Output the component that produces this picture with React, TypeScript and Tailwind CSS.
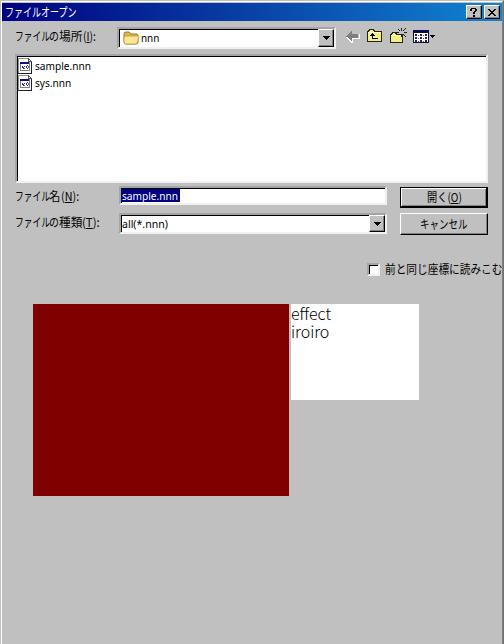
import React from 'react';

const sunken = 'border-2 border-t-[#a4a4a4] border-l-[#a4a4a4] border-b-[#f0f0f0] border-r-[#f0f0f0] bg-white shadow-[inset_1px_1px_0_#000]';
const raised = 'border border-t-white border-l-white border-b-black border-r-black bg-[#c0c0c0] shadow-[inset_-1px_-1px_0_#808080]';

// A run of text condensed horizontally inside a box of known width.
function Run({ box, scale, children }: { box: string; scale: string; children: React.ReactNode }) {
  return (
    <span className={`inline-block whitespace-nowrap ${box}`}>
      <span className={`inline-block origin-left ${scale}`}>{children}</span>
    </span>
  );
}

function DropButton() {
  return (
    <span className={`flex h-full w-4 shrink-0 items-center justify-center ${raised}`}>
      <svg width="7" height="4" shapeRendering="crispEdges"><path d="M0 0h7v1H0zM1 1h5v1H1zM2 2h3v1H2zM3 3h1v1H3z" /></svg>
    </span>
  );
}

function FileIcon() {
  return (
    <svg width="16" height="16" viewBox="0 0 16 16" shapeRendering="crispEdges" className="shrink-0">
      <path d="M0 0h10l4 4v11H0z" fill="#fff" />
      <path d="M0 0h1v15H0zM1 0h9v1H1z" fill="#909090" />
      <path d="M13 4h1v11h-1zM0 15h14v1H0z" fill="#222" />
      <path d="M10 0h1v3h3v1h-4zM11 1h1v1h-1zM12 2h1v1h-1z" fill="#555" />
      <path d="M2 4h10v9H2z" fill="#808080" />
      <path d="M2 4h9v2H2z" fill="#101080" />
      <path d="M3 6h8v6H3z" fill="#fff" />
      <path d="M4 8h1v2H4zM5 9h1v2H5zM6 8h1v1H6zM8 8h1v2H8zM9 7h1v1H9zM9 10h1v1H9z" fill="#2828a8" />
      <path d="M10 8h1v2h-1zM6 10h1v1H6z" fill="#607080" />
    </svg>
  );
}

function ToolIcons() {
  return (
    <svg width="92" height="18" viewBox="0 0 92 18" shapeRendering="crispEdges" className="ml-[9px]">
      <path d="M1 9h1v1h1v1h1v1h1v1h1v1h1v-3h7V7h1v5H8v4H6v-1H5v-1H4v-1H3v-1H2v-1H1z" fill="#fff" />
      <path d="M1 9h1V8h1V7h1V6h1V5h1V4h1v3h6v4H7v3H6v-1H5v-1H4v-1H3v-1H1z" fill="#808080" />
      <path d="M22.500 14.500v-10h1v-1h1v-1h4v1h1v1h7v10z" fill="#f4f080" stroke="#222" />
      <path d="M23 5h12v1H23z" fill="#ffffd0" />
      <path d="M27 6h1v1h1v1h1v1h-2v2h5v1h-6V9h-2V8h1V7h1z" fill="#000" />
      <path d="M45.500 15.500v-8h1v-1h1v-1h3v1h1v1h6v8z" fill="#f4f080" stroke="#222" />
      <path d="M46 8h11v1H46z" fill="#ffffd0" />
      <path d="M56 1h1v3h-1zM56 7h1v3h-1zM51 5h3v1h-3zM59 5h3v1h-3zM53 2h1v1h-1zM54 3h1v1h-1zM60 1h1v1h-1zM59 2h1v1h-1zM58 3h1v1h-1zM54 7h1v1h-1zM58 7h1v1h-1zM59 8h1v1h-1zM60 9h1v1h-1z" fill="#222" />
      <path d="M68 3h16v13H68z" fill="#101030" />
      <path d="M69 4h14v1H69z" fill="#000080" />
      <path d="M69 6h14v9H69z" fill="#fff" />
      <path d="M70 7h2v2h-2zM75 7h2v2h-2zM80 7h2v2h-2zM70 10h2v2h-2zM75 10h2v2h-2zM80 10h2v2h-2zM70 13h2v2h-2zM75 13h2v2h-2zM80 13h2v2h-2z" fill="#202070" />
      <path d="M73 8h1v1h-1zM78 8h1v1h-1zM73 11h1v1h-1zM78 11h1v1h-1zM73 14h1v1h-1zM78 14h1v1h-1z" fill="#555" />
      <path d="M85 8h5v1h-5zM86 9h3v1h-3zM87 10h1v1h-1z" fill="#000" />
    </svg>
  );
}

export default function App() {
  return (
    <div className="flex h-[644px] w-[504px] flex-col overflow-hidden border-l border-t border-r border-[#c0c0c0] border-r-[#707070] bg-[#c0c0c0] font-['Noto_Sans_CJK_JP',sans-serif] text-[12px] leading-[16px] text-black">
      <div className="flex h-full flex-col border-l border-r border-t border-white border-r-[#808080] pt-px">
        <header className="flex h-[18px] shrink-0 items-center bg-linear-to-r/srgb from-[#000080] to-[#1084d0] pl-[3px] pr-[2px] text-white">
          <Run box="w-[72px]" scale="scale-x-[.75]">ファイルオープン</Run>
          <div className="ml-auto flex gap-[2px]">
            <button className={`flex h-[14px] w-4 items-center justify-center ${raised}`} aria-label="?">
              <svg width="8" height="9" shapeRendering="crispEdges"><path d="M1 0h5v1H1zM0 1h2v2H0zM5 1h2v2H5zM4 3h2v1H4zM3 4h2v2H3zM3 7h2v2H3z" /></svg>
            </button>
            <button className={`flex h-[14px] w-4 items-center justify-center ${raised}`} aria-label="×">
              <svg width="8" height="7" shapeRendering="crispEdges"><path d="M0 0h2v1H0zM6 0h2v1H6zM1 1h2v1H1zM5 1h2v1H5zM2 2h4v1H2zM3 3h2v1H3zM2 4h4v1H2zM1 5h2v1H1zM5 5h2v1H5zM0 6h2v1H0zM6 6h2v1H6z" /></svg>
            </button>
          </div>
        </header>
        <main className="flex flex-col pl-[13px]">
          <div className="mt-[6px] flex h-[22px]">
            <div className="mt-px flex w-[102px]">
              <Run box="w-[34px]" scale="scale-x-[.73]">ファイル</Run>
              <Run box="w-[10px]" scale="scale-x-[.83]">の</Run>
              <Run box="w-[24px]" scale="scale-x-[.98]">場所</Run>
              <Run box="w-[18px]" scale="scale-x-[.86]">(<u>I</u>):</Run>
            </div>
            <div className={`flex w-[219px] items-center ${sunken}`}>
              <svg width="17" height="14" viewBox="0 0 17 14" className="ml-[4px]">
                <path d="M1 3q0-2 2-2h3l2 2h6q1 0 1 2v6q0 2-2 2H3q-2 0-2-2z" fill="#d6b747" stroke="#9c7b28" />
                <path d="M3 5h12q1 0 1 1l-2 6q0 1-2 1H3q-2 0-2-2V7q0-2 2-2z" fill="#fbe797" stroke="#b79538" strokeWidth=".7" />
              </svg>
              <span className="ml-px flex-1 font-['Noto_Sans'] text-[11px]"><Run box="w-[20px]" scale="scale-x-[.9]">nnn</Run></span>
              <DropButton />
            </div>
            <ToolIcons />
          </div>
          <div className={`mt-[5px] h-[129px] w-[473px] pt-px pl-px ${sunken}`}>
            {['sample.nnn', 'sys.nnn'].map((name) => (
              <div key={name} className="flex h-[17px] items-center">
                <FileIcon />
                <span className="ml-px font-['Noto_Sans'] text-[11px]"><Run box="w-[57px]" scale="scale-x-[.92]">{name}</Run></span>
              </div>
            ))}
          </div>
          <div className="mt-[3px] flex">
            <div className="flex w-[104px] flex-col">
              <div className="mt-[2px] flex h-[26px]">
                <Run box="w-[34px]" scale="scale-x-[.73]">ファイル</Run>
                <Run box="w-[12px]" scale="scale-x-[.95]">名</Run>
                <Run box="w-[18px]" scale="scale-x-[.9]">(<u>N</u>):</Run>
              </div>
              <div className="flex">
                <Run box="w-[34px]" scale="scale-x-[.73]">ファイル</Run>
                <Run box="w-[10px]" scale="scale-x-[.83]">の</Run>
                <Run box="w-[23px]" scale="scale-x-[.97]">種類</Run>
                <Run box="w-[18px]" scale="scale-x-[.95]">(<u>T</u>):</Run>
              </div>
            </div>
            <div className="flex w-[268px] flex-col gap-[8px] font-['Noto_Sans'] text-[11px]">
              <div className={`flex h-[19px] items-center ${sunken}`}>
                <span className="flex h-[13px] w-[59px] bg-[#000080] pl-px leading-[13px] text-white"><Run box="w-[57px]" scale="scale-x-[.92]">sample.nnn</Run></span>
              </div>
              <div className={`flex h-[21px] items-center ${sunken}`}>
                <span className="flex-1 pl-px"><Run box="w-[50px]" scale="scale-x-[.96]">all(*.nnn)</Run></span>
                <DropButton />
              </div>
            </div>
            <div className="ml-[13px] mt-px flex w-[88px] flex-col gap-[5px]">
              <button className="flex h-[21px] items-center justify-center border border-b-2 border-r-2 border-black bg-[#c0c0c0] shadow-[inset_1px_1px_0_#fff,inset_-1px_-1px_0_#808080]">
                <Run box="w-[34px]" scale="scale-x-[.85]">開く(<u>O</u>)</Run>
              </button>
              <button className={`flex h-[22px] items-center justify-center ${raised}`}>
                <Run box="w-[48px]" scale="scale-x-[.79]">キャンセル</Run>
              </button>
            </div>
          </div>
          <label className="ml-[352px] mt-[26px] flex h-[16px] items-center">
            <span className={`h-[13px] w-[13px] shrink-0 ${sunken}`} />
            <Run box="ml-[5px] w-[117px]" scale="scale-x-[.89]">前と同じ座標に読みこむ</Run>
          </label>
          <section className="ml-[18px] mt-[27px] flex items-start gap-[2px]">
            <div className="h-[192px] w-[256px] bg-[#800000]" />
            <div className="h-[96px] w-[128px] bg-white font-['Noto_Sans_CJK_JP'] text-[16px] font-light leading-[18px]">
              <div>effect</div>
              <div>iroiro</div>
            </div>
          </section>
        </main>
      </div>
    </div>
  );
}
